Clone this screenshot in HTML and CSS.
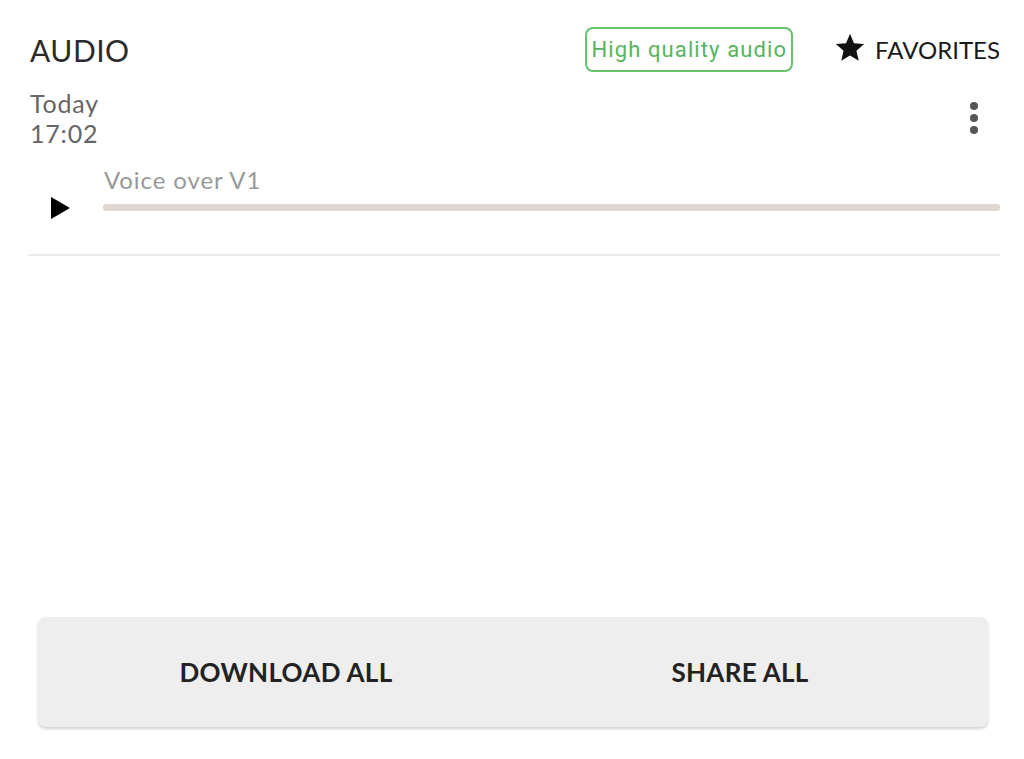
FILE: index.html
```html
<!DOCTYPE html>
<html lang="en">
<head>
  <meta charset="UTF-8" />
  <title>Audio</title>
  <link rel="stylesheet" href="styles.css">
</head>
<body>
  <div class="page">
    <header class="top">
      <h1 class="title">AUDIO</h1>
      <span class="badge">High quality audio</span>
      <button class="fav">
        <svg width="34" height="34" viewBox="0 0 24 24"><path d="M12 17.27L18.18 21l-1.64-7.03L22 9.24l-7.19-.61L12 2 9.19 8.63 2 9.24l5.46 4.73L5.82 21z" fill="#111"/></svg>
        FAVORITES
      </button>
    </header>

    <div class="item">
      <div class="item-head">
        <div class="date">Today<br>17:02</div>
        <button class="more">
          <svg width="10" height="34" viewBox="0 0 10 34"><circle cx="5" cy="5" r="4" fill="#555"/><circle cx="5" cy="17" r="4" fill="#555"/><circle cx="5" cy="29" r="4" fill="#555"/></svg>
        </button>
      </div>
      <div class="player">
        <button class="play">
          <svg width="20" height="22" viewBox="0 0 20 22"><path d="M1 0L20 11 1 22z" fill="#000"/></svg>
        </button>
        <div class="track">
          <div class="name">Voice over V1</div>
          <div class="bar"></div>
        </div>
      </div>
    </div>

    <div class="actions">
      <button class="action">DOWNLOAD ALL</button>
      <button class="action">SHARE ALL</button>
    </div>
  </div>
</body>
</html>
```

FILE: styles.css
```css
body {
  margin: 0;
  font-family: Lato, "Open Sans", sans-serif;
  color: #333;
  background: #fff;
}
button {
  font-family: inherit;
  background: none;
  border: none;
  padding: 0;
  cursor: pointer;
}
.page {
  min-height: 759px;
  display: flex;
  flex-direction: column;
  box-sizing: border-box;
  padding: 27px 24px 32px 28px;
}
.top {
  display: flex;
  align-items: center;
  padding-left: 2px;
}
.title {
  margin: 0;
  flex: 1;
  font-size: 30px;
  font-weight: 400;
  color: #2b2b2b;
  letter-spacing: 0.5px;
}
.badge {
  border: 2px solid #66c46d;
  border-radius: 8px;
  color: #56b45e;
  font-family: Roboto, sans-serif;
  font-size: 22px;
  font-weight: 400;
  letter-spacing: 1.1px;
  padding: 0 4px 0 5px;
  height: 41px;
  line-height: 41px;
}
.fav {
  margin-left: 40px;
  display: flex;
  align-items: center;
  gap: 8px;
  font-size: 24px;
  color: #1a1a1a;
}
.fav svg {
  margin-top: -4px;
}
.item {
  border-bottom: 2px solid #ebebeb;
  padding-bottom: 35px;
}
.item-head {
  display: flex;
  justify-content: space-between;
  align-items: flex-start;
  padding: 16px 0 0 2px;
}
.date {
  font-size: 25px;
  line-height: 30px;
  letter-spacing: 0.8px;
  color: #666;
}
.more {
  margin: 13px 21px 0 0;
}
.player {
  display: flex;
  align-items: flex-start;
  margin-top: 18px;
}
.play {
  width: 75px;
  padding-left: 22px;
  padding-top: 31px;
  text-align: left;
}
.play svg {
  display: block;
}
.track {
  flex: 1;
}
.name {
  font-size: 24px;
  letter-spacing: 0.9px;
  color: #999;
  line-height: 28px;
  padding-left: 1px;
}
.bar {
  margin-top: 10px;
  height: 7px;
  border-radius: 3px;
  background: #ddd8d4;
}
.actions {
  margin-top: auto;
  margin-left: 10px;
  margin-right: 12px;
  height: 110px;
  display: grid;
  grid-template-columns: 1fr 1fr;
  padding: 0 21px;
  background: #eee;
  border-radius: 8px;
  box-shadow: 0 2px 3px rgba(0, 0, 0, 0.18);
}
.action {
  font-size: 26px;
  font-weight: 700;
  color: #222;
  letter-spacing: 0.3px;
}
```
